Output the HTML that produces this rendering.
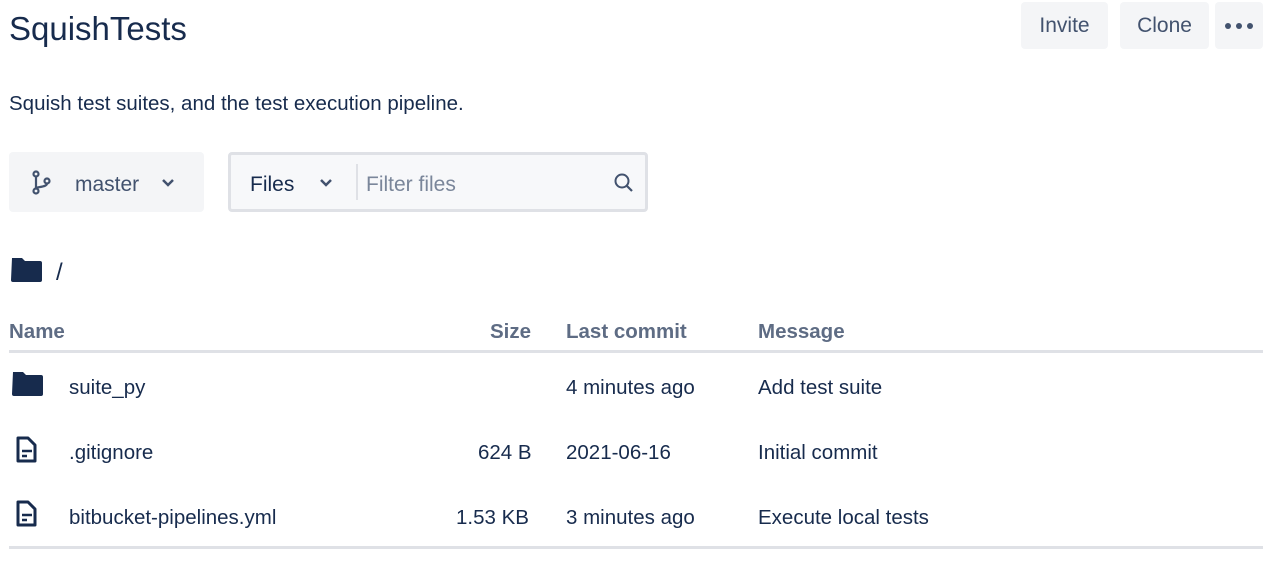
<!DOCTYPE html>
<html><head><style>
*{box-sizing:border-box;margin:0;padding:0}
body{width:1280px;height:568px;background:#fff;font-family:"Liberation Sans",sans-serif;color:#172b4d;position:relative;overflow:hidden}
.a{position:absolute;white-space:nowrap}
.btn{position:absolute;background:#f4f5f7;border-radius:4px;color:#42526e;font-size:21px;display:flex;align-items:center;justify-content:center}
.h{font-size:20.5px;font-weight:bold;color:#5e6c84;top:320px}
.r{font-size:20.5px;color:#172b4d}
</style></head><body>
<div class="a" style="left:9px;top:10px;font-size:33px;color:#172b4d">SquishTests</div>
<div class="btn" style="left:1021px;top:2px;width:87px;height:47px">Invite</div>
<div class="btn" style="left:1120px;top:2px;width:89px;height:47px">Clone</div>
<div class="btn" style="left:1215px;top:2px;width:48px;height:47px">
<svg width="30" height="8"><circle cx="4" cy="4" r="3" fill="#42526e"/><circle cx="15" cy="4" r="3" fill="#42526e"/><circle cx="26" cy="4" r="3" fill="#42526e"/></svg></div>
<div class="a" style="left:9px;top:92px;font-size:20.5px">Squish test suites, and the test execution pipeline.</div>

<div class="a" style="left:9px;top:152px;width:195px;height:60px;background:#f4f5f7;border-radius:4px"></div>
<svg class="a" style="left:31px;top:170px" width="24" height="26" viewBox="0 0 24 26"><g fill="none" stroke="#42526e" stroke-width="2.2"><circle cx="5" cy="4" r="2.5"/><circle cx="5" cy="21" r="2.5"/><circle cx="16" cy="11" r="2.5"/><path d="M5 6.5v12M16 13.5c0 4-11 3-11 5"/></g></svg>
<div class="a" style="left:75px;top:173px;font-size:21px;color:#42526e">master</div>
<svg class="a" style="left:161px;top:178px" width="14" height="10"><path d="M2 2l5 5 5-5" fill="none" stroke="#42526e" stroke-width="2.5"/></svg>

<div class="a" style="left:228px;top:152px;width:420px;height:60px;background:#f7f8fa;border:3px solid #dfe1e6;border-radius:4px"></div>
<div class="a" style="left:250px;top:173px;font-size:21px;color:#172b4d">Files</div>
<svg class="a" style="left:319px;top:178px" width="14" height="10"><path d="M2 2l5 5 5-5" fill="none" stroke="#42526e" stroke-width="2.5"/></svg>
<div class="a" style="left:356px;top:164px;width:2px;height:36px;background:#dfe1e6"></div>
<div class="a" style="left:366px;top:173px;font-size:21px;color:#7a869a">Filter files</div>
<svg class="a" style="left:613px;top:172px" width="22" height="22"><circle cx="9" cy="9" r="6.5" fill="none" stroke="#42526e" stroke-width="2"/><path d="M14 14l5 5" stroke="#42526e" stroke-width="2.2"/></svg>

<svg class="a" style="left:10px;top:256px" width="32" height="28"><path d="M2 2h10l3 3h15a2 2 0 0 1 2 2v17a2 2 0 0 1-2 2H3a2 2 0 0 1-2-2z" fill="#172b4d"/></svg>
<div class="a" style="left:56px;top:259px;font-size:24px">/</div>

<div class="a h" style="left:9px">Name</div>
<div class="a h" style="left:490px">Size</div>
<div class="a h" style="left:566px">Last commit</div>
<div class="a h" style="left:758px">Message</div>
<div class="a" style="left:9px;top:350px;width:1254px;height:3px;background:#dfe1e6"></div>

<svg class="a" style="left:11px;top:370px" width="32" height="28"><path d="M2 2h10l3 3h15a2 2 0 0 1 2 2v17a2 2 0 0 1-2 2H3a2 2 0 0 1-2-2z" fill="#172b4d"/></svg>
<div class="a r" style="left:69px;top:376px">suite_py</div>
<div class="a r" style="left:566px;top:376px">4 minutes ago</div>
<div class="a r" style="left:758px;top:376px">Add test suite</div>

<svg class="a" style="left:15px;top:436px" width="24" height="28"><path d="M3 2h10l7 7v16H3z" fill="none" stroke="#172b4d" stroke-width="3" stroke-linejoin="round"/><path d="M7 15h10M7 20h5" stroke="#172b4d" stroke-width="2.5"/></svg>
<div class="a r" style="left:69px;top:441px">.gitignore</div>
<div class="a r" style="left:478px;top:441px">624 B</div>
<div class="a r" style="left:566px;top:441px">2021-06-16</div>
<div class="a r" style="left:758px;top:441px">Initial commit</div>

<svg class="a" style="left:15px;top:500px" width="24" height="28"><path d="M3 2h10l7 7v16H3z" fill="none" stroke="#172b4d" stroke-width="3" stroke-linejoin="round"/><path d="M7 15h10M7 20h5" stroke="#172b4d" stroke-width="2.5"/></svg>
<div class="a r" style="left:69px;top:506px">bitbucket-pipelines.yml</div>
<div class="a r" style="left:456px;top:506px">1.53 KB</div>
<div class="a r" style="left:566px;top:506px">3 minutes ago</div>
<div class="a r" style="left:758px;top:506px">Execute local tests</div>
<div class="a" style="left:9px;top:546px;width:1254px;height:3px;background:#dfe1e6"></div>
</body></html>
